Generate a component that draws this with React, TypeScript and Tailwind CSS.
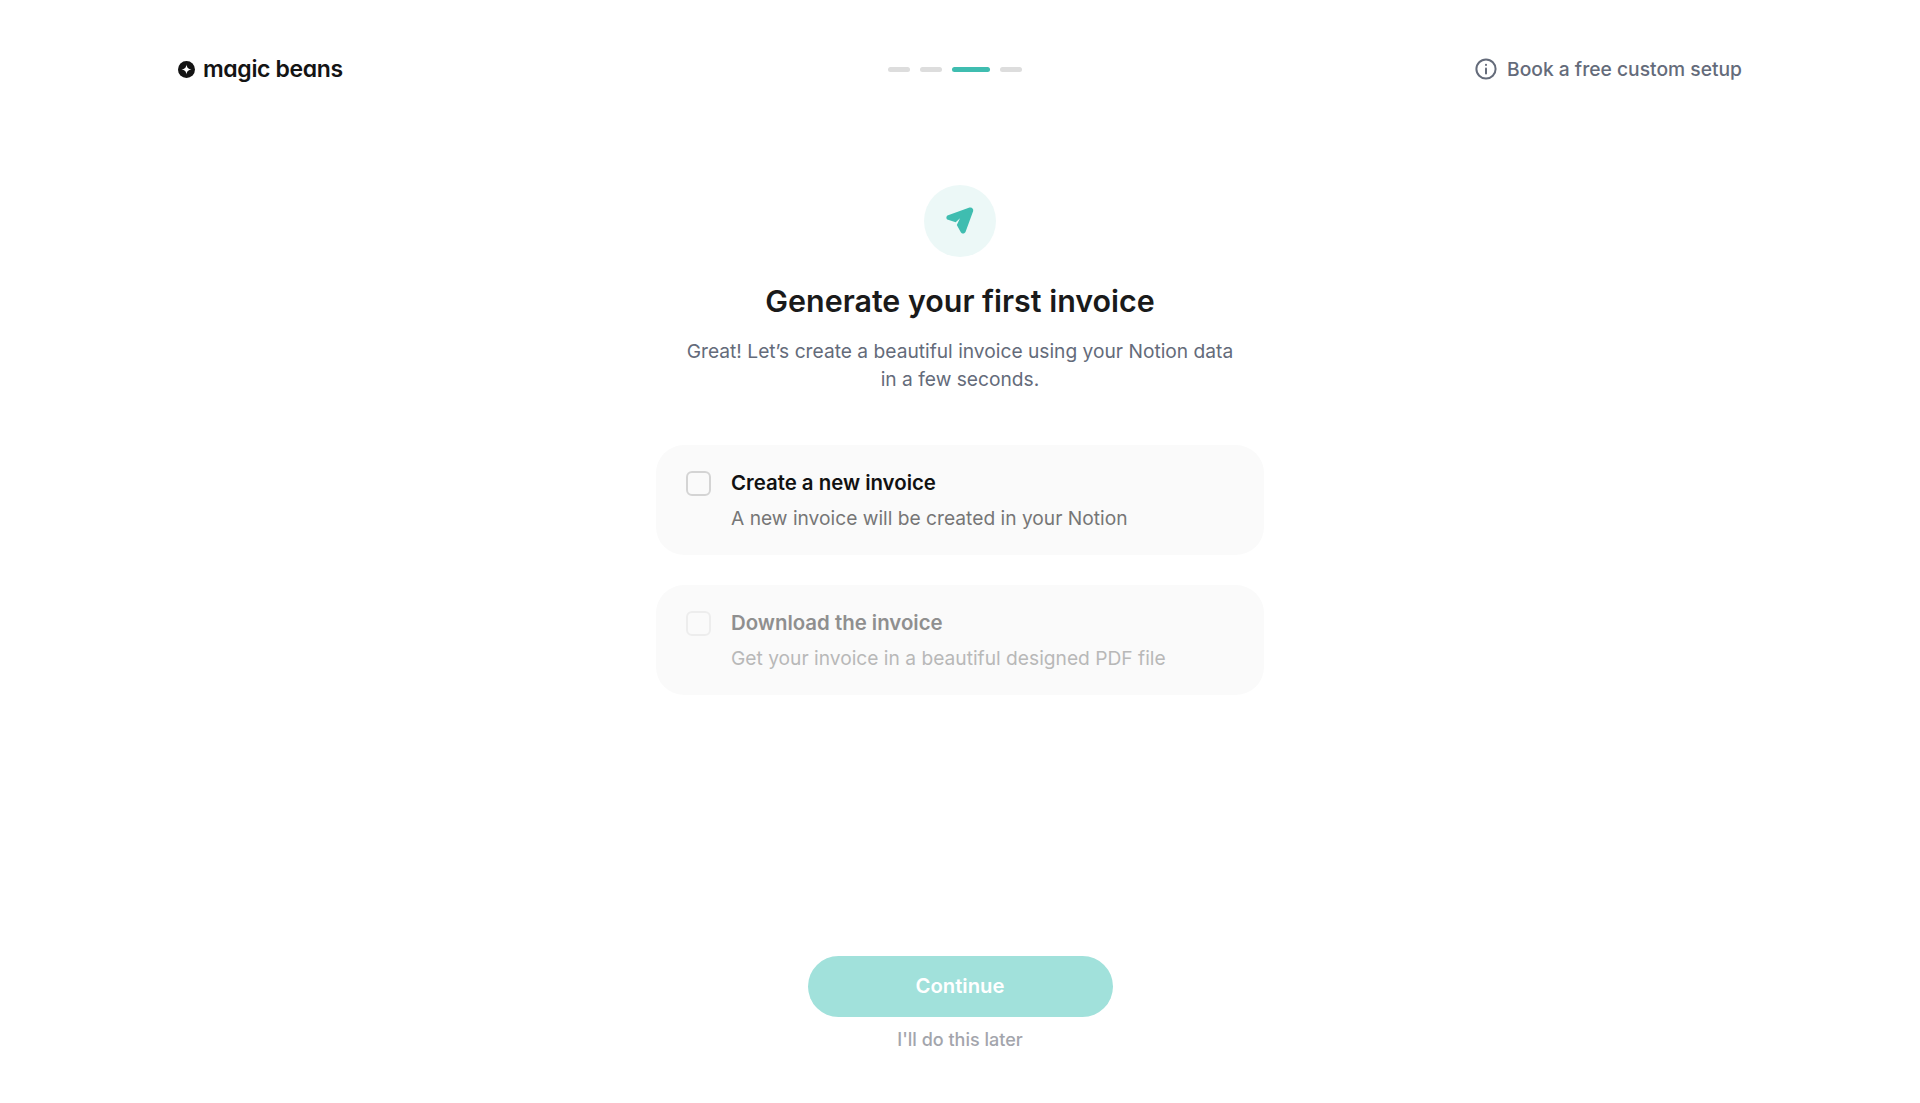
import React from 'react';

const OptionCard = ({ title, desc, muted }: { title: string; desc: string; muted?: boolean }) => (
    <div className="flex h-[110px] w-[608px] items-start rounded-[28px] bg-[#fafafa] pl-[30px] pt-[26px]">
        <div className={`h-[25px] w-[25px] rounded-[6px] border-2 ${muted ? 'border-[#ededed]' : 'border-[#d4d4d4]'}`} />
        <div className="ml-[20px] -mt-[1px]">
            <p className={`text-[20.4px] font-semibold leading-[25px] ${muted ? 'text-[#8f8f8f]' : 'text-[#111111]'}`}>{title}</p>
            <p className={`mt-[11px] text-[19.2px] leading-[25px] ${muted ? 'text-[#b8b8b8]' : 'text-[#767676]'}`}>{desc}</p>
        </div>
    </div>
);

export default function App() {
    return (
        <div className="flex h-[1103px] w-[1920px] flex-col items-center overflow-hidden bg-white font-['Inter',sans-serif]">
            {/* Top bar */}
            <header className="grid h-[28px] w-full grid-cols-3 items-center px-[178px] mt-[55px]">
                <div className="flex items-center">
                    <svg width="17" height="17" viewBox="0 0 17 17">
                        <circle cx="8.5" cy="8.5" r="8.5" fill="#141414" />
                        <path d="M8.5 3.5 C9 6.8 10.2 8 13.5 8.5 C10.2 9 9 10.2 8.5 13.5 C8 10.2 6.8 9 3.5 8.5 C6.8 8 8 6.8 8.5 3.5Z" fill="#fff" />
                    </svg>
                    <span className="ml-[8px] text-[23px] font-semibold leading-[28px] tracking-[-0.35px] text-[#141414] [font-feature-settings:'cv11']">magic beans</span>
                </div>
                <div className="flex items-center justify-center gap-[10px] pr-[10px]">
                    <div className="h-[5px] w-[22px] rounded-full bg-[#dddddd]" />
                    <div className="h-[5px] w-[22px] rounded-full bg-[#dddddd]" />
                    <div className="h-[5px] w-[38px] rounded-full bg-[#3fbdb0]" />
                    <div className="h-[5px] w-[22px] rounded-full bg-[#dddddd]" />
                </div>
                <div className="flex items-center justify-end">
                    <svg width="22" height="22" viewBox="0 0 22 22" fill="none" stroke="#646b7a" strokeWidth="2" strokeLinecap="round">
                        <circle cx="11" cy="11" r="9.6" />
                        <path d="M11 10.5v5" />
                        <path d="M11 6.8v.1" />
                    </svg>
                    <span className="ml-[10px] text-[19.25px] font-medium leading-[28px] text-[#646b7a]">Book a free custom setup</span>
                </div>
            </header>

            {/* Main */}
            <div className="mt-[102px] flex h-[72px] w-[72px] items-center justify-center rounded-full bg-[#ecf8f7]">
                <svg width="30" height="30" viewBox="0 0 30 30">
                    <path d="M24.5 1.6 C26.8 .9 28.9 3 28.1 5.2 L20.6 25.8 C19.8 28 16.9 28.2 15.8 26.2 L11.8 19 L15 12.3 L10.7 16.3 L3 13.8 C.8 13 .9 9.9 3.1 9.2 Z" fill="#3fbdb0" />
                </svg>
            </div>
            <h1 className="mt-[24px] text-[30.4px] font-semibold leading-[40px] text-[#1a1a1a]">Generate your first invoice</h1>
            <p className="mt-[16px] text-center text-[19.2px] leading-[28px] text-[#646b7a]">
                Great! Let’s create a beautiful invoice using your Notion data
                <br />
                in a few seconds.
            </p>

            <div className="mt-[52px] flex flex-col gap-[30px]">
                <OptionCard title="Create a new invoice" desc="A new invoice will be created in your Notion" />
                <OptionCard muted title="Download the invoice" desc="Get your invoice in a beautiful designed PDF file" />
            </div>

            {/* Footer actions */}
            <button className="mt-[261px] h-[61px] w-[305px] rounded-full bg-[#a1e1db] text-[20.3px] font-semibold text-white">Continue</button>
            <a className="mt-[11px] text-[18px] font-medium leading-[24px] text-[#a3a5ac]">I'll do this later</a>
        </div>
    );
}
